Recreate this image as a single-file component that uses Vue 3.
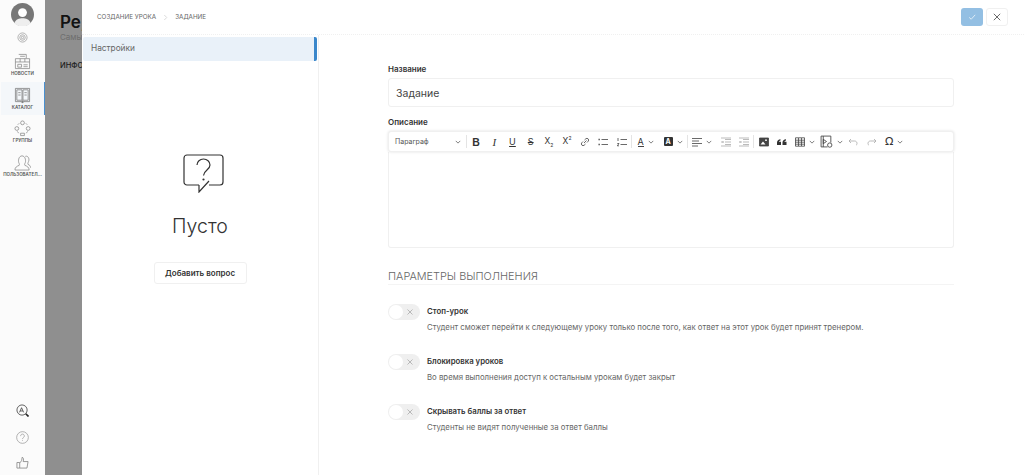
<script setup>
const options = [
  { title: 'Стоп-урок', text: 'Студент сможет перейти к следующему уроку только после того, как ответ на этот урок будет принят тренером.' },
  { title: 'Блокировка уроков', text: 'Во время выполнения доступ к остальным урокам будет закрыт' },
  { title: 'Скрывать баллы за ответ', text: 'Студенты не видят полученные за ответ баллы' },
]
</script>

<template>
  <div class="app">
    <aside class="rail">
      <div class="avatar">
        <svg viewBox="0 0 24 24" width="23" height="23"><circle cx="12" cy="12" r="12" fill="#777"/><circle cx="12" cy="10" r="4.6" fill="#fff"/><path d="M3.500 21c1.500-4 5-5 8.500-5s7 1 8.500 5a12 12 0 0 1-17 0z" fill="#eee"/></svg>
      </div>
      <svg class="gear" viewBox="0 0 12 12" width="11" height="11" fill="none" stroke="#999" stroke-width=".8"><circle cx="6" cy="6" r="5"/><circle cx="6" cy="6" r="3"/><circle cx="6" cy="6" r="1.300"/></svg>
      <nav class="nav">
        <div class="nav-item">
          <svg viewBox="0 0 18 18" width="17" height="17" fill="none" stroke="#888" stroke-width=".8"><path d="M5 1.500h8v4M1.500 6h15v10.500h-15zM6.500 3.500h5M1.500 9.500h15M6.500 6v3.500M11.500 6v3.500M4 12h4v3h-4zM10 12.500h4.500M10 14.500h4.500"/></svg>
          <span>НОВОСТИ</span>
        </div>
        <div class="nav-item active">
          <svg viewBox="0 0 18 18" width="17" height="17" fill="none" stroke="#777" stroke-width=".8"><path d="M1.500 1.500h15v14h-15zM3 3h5.500v11H3zM9.500 3H15v11H9.500zM9 14v3M7.500 15.500L9 17l1.500-1.500M4.500 6h2.500M4.500 8.500h2.500M11 6h2.500M11 8.500h2.500"/></svg>
          <span>КАТАЛОГ</span>
        </div>
        <div class="nav-item">
          <svg viewBox="0 0 18 18" width="17" height="17" fill="none" stroke="#888" stroke-width=".8"><circle cx="9" cy="3" r="2"/><circle cx="3" cy="9" r="2"/><circle cx="15" cy="9" r="2"/><path d="M7 16.500v-2.500h4v2.500zM4 5l1.500-1.500M12.500 3.500L14 5M3.500 12l1.500 2M14.500 12l-1.500 2"/></svg>
          <span>ГРУППЫ</span>
        </div>
        <div class="nav-item">
          <svg viewBox="0 0 18 18" width="17" height="17" fill="none" stroke="#888" stroke-width=".8"><path d="M1 17c0-3 2-4 4.500-5 .5-1 0-2-.5-3-.8-3 .5-7 3.500-7s4.300 4 3.500 7c-.5 1-1 2-.5 3 2.500 1 4.500 2 4.500 5zM12 2.500c2-.8 4 1 3.800 4-.2 2-1.500 3-1 4.500 1.500.5 2.700 1.500 2.700 3.500"/></svg>
          <span>ПОЛЬЗОВАТЕЛ...</span>
        </div>
      </nav>
      <div class="rail-bottom">
        <svg viewBox="0 0 14 14" width="13" height="13" fill="none" stroke="#444"><circle cx="6.500" cy="6.500" r="5.500" stroke-width=".9"/><path d="M3.800 9L6 4l2.200 5M4.600 7.500h2.800" stroke-width=".9"/><path d="M10.500 10.500l3 3" stroke-width="1.800" stroke="#222"/></svg>
        <svg viewBox="0 0 14 14" width="13" height="13" fill="none" stroke="#999" stroke-width=".8"><circle cx="7" cy="7" r="6.300"/><path d="M5 5.500c0-3 4-2.800 4 0 0 1.500-2 1.500-2 3.200M7 10v.8"/></svg>
        <svg viewBox="0 0 14 14" width="13" height="13" fill="none" stroke="#888" stroke-width=".9"><path d="M1 7h3v6H1zM4 7.500c2-1.500 2.500-3.500 2.500-6 1.700 0 2 2 1.200 4.500H13l-1.200 7H4"/></svg>
      </div>
    </aside>

    <main class="page">
      <div class="page-clip">
        <h1 class="page-title">Ре,</h1>
        <p class="page-sub">Самы</p>
        <div class="page-tab">ИНФО</div>
      </div>
      <div class="overlay"></div>

      <section class="drawer">
        <header class="drawer-head">
          <div class="crumbs">
            <span>СОЗДАНИЕ УРОКА</span>
            <svg viewBox="0 0 6 8" width="5" height="7" fill="none" stroke="#c8c8c8" stroke-width=".8"><path d="M1.500 1l3 3-3 3"/></svg>
            <span>ЗАДАНИЕ</span>
          </div>
          <div class="head-actions">
            <button class="btn-save">
              <svg viewBox="0 0 10 10" width="8" height="8" fill="none" stroke="#e6f0f8" stroke-width="1.100"><path d="M1.500 5.500l2.500 2.300 5-5.500"/></svg>
            </button>
            <button class="btn-close">
              <svg viewBox="0 0 10 10" width="8" height="8" fill="none" stroke="#555" stroke-width="1.100"><path d="M1 1l8 8M9 1l-8 8"/></svg>
            </button>
          </div>
        </header>

        <div class="drawer-body">
          <div class="side">
            <div class="side-item">Настройки</div>
            <div class="empty">
              <svg class="empty-icon" viewBox="0 0 41 39" width="41" height="39" fill="none" stroke="#333" stroke-width="1.200">
                <path d="M16 31H4a3 3 0 0 1-3-3V4a3 3 0 0 1 3-3h33a3 3 0 0 1 3 3v24a3 3 0 0 1-3 3H26"/>
                <path d="M16 31v7l10-11"/>
                <path d="M14 11c0-3.500 3-6 6.500-6s6.500 2.500 6.500 6c0 5-6 5-6.500 10.500"/>
                <circle cx="20.500" cy="25.500" r="1.100" fill="#333" stroke="none"/>
              </svg>
              <div class="empty-title">Пусто</div>
              <button class="btn-add">Добавить вопрос</button>
            </div>
          </div>

          <div class="form">
            <label class="label">Название</label>
            <div class="input">Задание</div>
            <label class="label desc-label">Описание</label>

            <div class="toolbar">
              <div class="tb para"><span>Параграф</span><svg class="chev" viewBox="0 0 8 5"><path d="M1 1l3 3 3-3"/></svg></div>
              <i class="sep"></i>
              <div class="tb"><b class="g-b">B</b></div>
              <div class="tb"><span class="g-i">I</span></div>
              <div class="tb"><span class="g-u">U</span></div>
              <div class="tb"><span class="g-s">S</span></div>
              <div class="tb"><span class="g-x">X<sub>2</sub></span></div>
              <div class="tb"><span class="g-x">X<sup>2</sup></span></div>
              <div class="tb"><svg class="ic" viewBox="0 0 10 10"><path d="M4 6l2.500-2.500M3 4.500L1.800 5.800a1.700 1.700 0 0 0 2.400 2.400l1.300-1.200M7 5.500l1.200-1.300a1.700 1.700 0 0 0-2.400-2.400L4.500 3"/></svg></div>
              <div class="tb"><svg class="ic" viewBox="0 0 10 10"><path d="M3.500 2.500H10M3.500 7.500H10" /><path d="M.5 2.500h1.300M.5 7.500h1.300" stroke-width="1.500"/></svg></div>
              <div class="tb"><svg class="ic" viewBox="0 0 10 10"><path d="M3.500 2.500H10M3.500 7.500H10" /><path d="M1 1v3M.3 6.500H2L.3 8.800H2"/></svg></div>
              <i class="sep"></i>
              <div class="tb drop w28"><span class="g-a">A</span><svg class="chev" viewBox="0 0 8 5"><path d="M1 1l3 3 3-3"/></svg></div>
              <div class="tb drop w27"><span class="g-abg">A</span><svg class="chev" viewBox="0 0 8 5"><path d="M1 1l3 3 3-3"/></svg></div>
              <i class="sep"></i>
              <div class="tb drop w29"><svg class="ic" viewBox="0 0 10 10"><path d="M0 1.500h10M0 4h7M0 6.500h10M0 9h6"/></svg><svg class="chev" viewBox="0 0 8 5"><path d="M1 1l3 3 3-3"/></svg></div>
              <div class="tb dim"><svg class="ic" viewBox="0 0 10 10"><path d="M4 2.500h6M4 5h6M4 7.500h6M0 1h10M0 9h10M0 5h2.500M1.500 4l1 1-1 1"/></svg></div>
              <div class="tb dim"><svg class="ic" viewBox="0 0 10 10"><path d="M4 2.500h6M4 5h6M4 7.500h6M0 1h10M0 9h10M.5 5H3M1.500 4l-1 1 1 1"/></svg></div>
              <i class="sep"></i>
              <div class="tb w19"><svg class="ic" viewBox="0 0 10 10"><path d="M.5 1h9v8h-9z" fill="#444"/><circle cx="7" cy="3.200" r=".9" fill="#fff" stroke="none"/><path d="M1.500 7.500L4 4.500l2.500 3z" fill="#fff" stroke="none"/></svg></div>
              <div class="tb"><svg class="ic" viewBox="0 0 10 10"><path d="M0 8V5.500C0 3.500 1.500 2.500 3.500 2.200v1.300c-1 .2-1.500.7-1.500 1.300h2V8zM5.500 8V5.500c0-2 1.500-3 3.500-3.300v1.300c-1 .2-1.500.7-1.500 1.300h2V8z" fill="#333" stroke="none"/></svg></div>
              <div class="tb drop w27"><svg class="ic" viewBox="0 0 10 10"><path d="M.5.800h9v8.400h-9zM.5 3.200h9M.5 5.200h9M.5 7.200h9M3.500 1v8M6.500 1v8"/></svg><svg class="chev" viewBox="0 0 8 5"><path d="M1 1l3 3 3-3"/></svg></div>
              <div class="tb drop w26"><svg class="ic big" viewBox="0 0 12 12"><path d="M7 11H1V1h9v6"/><path d="M3 4l3 2-3 2zM3 1v10"/><circle cx="9" cy="9.300" r="2"/></svg><svg class="chev" viewBox="0 0 8 5"><path d="M1 1l3 3 3-3"/></svg></div>
              <div class="tb dim"><svg class="ic" viewBox="0 0 10 10"><path d="M3 2L1 4l2 2M1 4h5.500C8.500 4 9 5.500 9 6.500S8.500 8 8 8"/></svg></div>
              <div class="tb dim"><svg class="ic" viewBox="0 0 10 10"><path d="M7 2l2 2-2 2M9 4H3.500C1.500 4 1 5.500 1 6.500S1.500 8 2 8"/></svg></div>
              <div class="tb drop w27"><span class="g-o">Ω</span><svg class="chev" viewBox="0 0 8 5"><path d="M1 1l3 3 3-3"/></svg></div>
            </div>
            <div class="editor"></div>

            <h2 class="section">ПАРАМЕТРЫ ВЫПОЛНЕНИЯ</h2>

            <div class="options">
              <div v-for="o in options" :key="o.title" class="option">
                <div class="switch">
                  <span class="knob"></span>
                  <svg viewBox="0 0 6 6" width="6" height="6" fill="none" stroke="#aaa" stroke-width=".8"><path d="M.5.500l5 5M5.500.500l-5 5"/></svg>
                </div>
                <div class="option-text">
                  <div class="option-title">{{ o.title }}</div>
                  <div class="option-desc">{{ o.text }}</div>
                </div>
              </div>
            </div>
          </div>
        </div>
      </section>
    </main>
  </div>
</template>

<style>
html, body { margin: 0; overflow: hidden; background: #fff; }
</style>

<style scoped>
.app {
  display: flex;
  width: 1024px;
  height: 475px;
  overflow: hidden;
  font-family: Inter, "Noto Sans", sans-serif;
  color: #333;
}
.rail {
  width: 45px;
  flex: none;
  background: #fbfbfb;
  display: flex;
  flex-direction: column;
  align-items: center;
  padding-top: 3px;
  box-sizing: border-box;
}
.avatar { height: 23px; }
.avatar svg { display: block; }
.gear { margin-top: 6px; }
.nav { width: 100%; margin-top: 5px; display: flex; flex-direction: column; }
.nav-item {
  height: 33.500px;
  display: flex;
  flex-direction: column;
  align-items: center;
  justify-content: center;
  gap: 1px;
  box-sizing: border-box;
  font-size: 4.500px;
  font-weight: 600;
  color: #555;
  white-space: nowrap;
}
.nav-item.active {
  background: #f4f7fa;
  border-right: 1.500px solid #4a90d0;
  margin-left: 1px;
}
.rail-bottom {
  margin-top: auto;
  padding-bottom: 6px;
  display: flex;
  flex-direction: column;
  align-items: center;
  gap: 14px;
}
.rail-bottom svg { display: block; }
.rail-bottom svg:last-child { margin-top: -2px; }

.page {
  flex: 1;
  position: relative;
  box-sizing: border-box;
  min-width: 0;
}
.page-clip {
  margin-left: 15px;
  padding-top: 12px;
  white-space: nowrap;
}
.page-title { margin: 0; font-size: 17px; font-weight: 600; line-height: 20px; color: #222; }
.page-sub { margin: 0; font-size: 8px; line-height: 11px; color: #c4c4c4; }
.page-tab { margin-top: 18px; font-size: 7.500px; font-weight: 500; color: #333; }
.overlay { position: absolute; inset: 0; background: rgba(0, 0, 0, .44); }

.drawer {
  position: absolute;
  left: 37px;
  top: 0;
  right: 0;
  bottom: 0;
  background: #fff;
  display: flex;
  flex-direction: column;
}
.drawer-head {
  height: 35px;
  flex: none;
  box-sizing: border-box;
  border-bottom: 1px dotted #f0f0f0;
  display: flex;
  align-items: center;
  justify-content: space-between;
  padding: 0 16px 0 15px;
}
.crumbs {
  display: flex;
  align-items: center;
  gap: 7px;
  font-size: 6.300px;
  color: #666;
}
.head-actions { display: flex; gap: 3px; }
button { font-family: inherit; padding: 0; cursor: pointer; }
.btn-save, .btn-close {
  width: 22px;
  height: 18px;
  border-radius: 3px;
  display: flex;
  align-items: center;
  justify-content: center;
}
.btn-save { background: #93bfe3; border: none; }
.btn-close { background: #fff; border: 1px solid #f0f0f0; }

.drawer-body { flex: 1; display: flex; min-height: 0; }
.side {
  width: 237px;
  flex: none;
  border-right: 1px solid #f0f0f0;
  box-sizing: border-box;
  padding: 2px 1px 0 1px;
  display: flex;
  flex-direction: column;
}
.side-item {
  height: 24px;
  background: #e9f1f9;
  border-right: 3px solid #3a87cb;
  border-radius: 2px;
  box-sizing: border-box;
  display: flex;
  align-items: center;
  padding: 0 0 2px 8px;
  font-size: 8.300px;
  color: #666;
}
.empty {
  display: flex;
  flex-direction: column;
  align-items: center;
  padding-top: 93px;
}
.empty-icon { margin-left: 6px; }
.empty-title { margin-top: 21px; font-size: 19.500px; font-weight: 300; line-height: 24px; color: #333; }
.btn-add {
  margin-top: 24px;
  width: 93px;
  height: 22px;
  background: #fff;
  border: 1px solid #f0f0f0;
  border-radius: 3px;
  font-size: 8px;
  font-weight: 600;
  color: #333;
}

.form {
  flex: 1;
  padding: 29px 70px 0 69px;
  display: flex;
  flex-direction: column;
  min-width: 0;
}
.label { font-size: 8px; font-weight: 600; line-height: 10px; color: #333; height: 10px; }
.input {
  margin-top: 4px;
  height: 29px;
  border: 1px solid #f0f0f0;
  border-radius: 3px;
  box-sizing: border-box;
  display: flex;
  align-items: center;
  padding: 1px 0 0 7px;
  font-size: 10.500px;
  color: #444;
}
.desc-label { margin-top: 10px; }
.toolbar {
  margin-top: 4px;
  height: 21px;
  box-sizing: border-box;
  border: 1px solid #f0f0f0;
  border-radius: 3px;
  box-shadow: 0 0 3px rgba(0, 0, 0, .12);
  display: flex;
  align-items: center;
  position: relative;
  z-index: 1;
  background: #fff;
}
.tb {
  width: 18.200px;
  height: 100%;
  flex: none;
  display: flex;
  align-items: center;
  justify-content: center;
  gap: 4px;
  font-size: 9px;
  color: #333;
}
.para { width: 77px; justify-content: space-between; padding: 0 5px 0 6px; box-sizing: border-box; font-size: 7px; color: #555; }
.w19 { width: 19px; }
.w26 { width: 26px; }
.w27 { width: 27px; }
.w28 { width: 28px; }
.w29 { width: 29px; }
.sep { width: 1px; height: 13px; background: #e4e4e4; flex: none; }
.chev { width: 6px; height: 4px; fill: none; stroke: #555; stroke-width: 1; flex: none; }
.ic { width: 10px; height: 10px; fill: none; stroke: #444; stroke-width: .8; flex: none; }
.ic.big { width: 13px; height: 13px; }
.dim { opacity: .45; }
.g-b { font-weight: 800; font-size: 10.500px; font-family: "Liberation Sans", sans-serif; }
.g-i { font-style: italic; font-family: "Liberation Serif", serif; font-size: 11px; }
.g-u { text-decoration: underline; font-size: 9px; }
.g-s { text-decoration: line-through; font-size: 9px; }
.g-x { font-size: 8.500px; line-height: 1; }
.g-x sub, .g-x sup { font-size: 5px; line-height: 0; }
.g-a { font-size: 9px; border-bottom: 1px solid #444; line-height: 9px; }
.g-abg { font-size: 7px; font-weight: 700; background: #333; color: #fff; width: 9px; height: 9px; display: flex; align-items: center; justify-content: center; border-radius: 1px; }
.g-o { font-size: 11px; font-family: "DejaVu Sans", sans-serif; line-height: 1; }
.editor {
  height: 96px;
  border: 1px solid #f0f0f0;
  border-top: none;
  border-radius: 0 0 3px 3px;
  box-sizing: border-box;
}
.section {
  margin: 21px 0 0;
  font-size: 10.900px;
  font-weight: 300;
  line-height: 14px;
  padding-bottom: 1px;
  color: #666;
  border-bottom: 1px solid #f4f4f4;
}
.options { margin-top: 19px; display: flex; flex-direction: column; gap: 22px; }
.option { display: flex; gap: 7px; height: 28px; }
.switch {
  width: 32px;
  height: 16px;
  border-radius: 8px;
  background: #efefef;
  display: flex;
  align-items: center;
  justify-content: flex-end;
  padding-right: 7px;
  box-sizing: border-box;
  position: relative;
  flex: none;
}
.knob {
  position: absolute;
  left: 1px;
  top: 1px;
  width: 14px;
  height: 14px;
  border-radius: 50%;
  background: #fff;
}
.option-title { font-size: 7.800px; font-weight: 600; line-height: 14px; color: #333; }
.option-desc { margin-top: 3px; font-size: 7.800px; line-height: 12px; color: #666; white-space: nowrap; }
</style>
